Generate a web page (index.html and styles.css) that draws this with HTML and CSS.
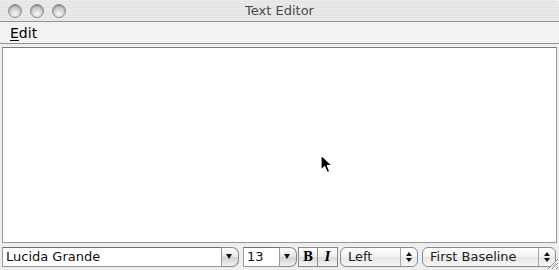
FILE: index.html
```html
<!DOCTYPE html>
<html lang="en">
<head>
    <meta charset="UTF-8">
    <title>Text Editor</title>
    <link rel="stylesheet" href="styles.css">
</head>
<body>
    <div class="window">
        <div class="titlebar">
            <div class="lights">
                <span class="light"></span>
                <span class="light"></span>
                <span class="light"></span>
            </div>
            <div class="title">Text Editor</div>
            <div></div>
        </div>
        <div class="menubar">
            <span class="menu"><u>E</u>dit</span>
        </div>
        <div class="editor">
            <svg class="pointer" width="14" height="21" viewBox="0 0 14 21">
                <path d="M1 1 L1 16 L4.6 12.6 L7.2 18.6 L9.8 17.5 L7.3 11.6 L12.2 11.6 Z" fill="#000" stroke="#fff" stroke-width="1.2" stroke-linejoin="round"/>
            </svg>
        </div>
        <div class="toolbar">
            <div class="combo font-combo">
                <span class="field">Lucida Grande</span>
                <span class="drop"><i class="tri"></i></span>
            </div>
            <div class="combo size-combo">
                <span class="field">13</span>
                <span class="drop"><i class="tri"></i></span>
            </div>
            <div class="styles">
                <button class="style bold">B</button>
                <button class="style italic">I</button>
            </div>
            <div class="popup align-popup">
                <span class="label">Left</span>
                <span class="arrows"><i class="up"></i><i class="down"></i></span>
            </div>
            <div class="popup base-popup">
                <span class="label">First Baseline</span>
                <span class="arrows"><i class="up"></i><i class="down"></i></span>
            </div>
            <svg class="grip" width="14" height="14" viewBox="0 0 14 14">
                <path d="M13 3 L3 13 M13 7 L7 13 M13 11 L11 13" stroke="#8a8a8a" stroke-width="1"/>
                <path d="M13 4 L4 13 M13 8 L8 13" stroke="#fff" stroke-width="1"/>
            </svg>
        </div>
    </div>
</body>
</html>
```

FILE: styles.css
```css
body, html {
    margin: 0;
    height: 100%;
    overflow: hidden;
    font-family: "DejaVu Sans", "Liberation Sans", sans-serif;
    color: #111;
}
.window {
    width: 559px;
    height: 270px;
    display: flex;
    flex-direction: column;
    background: repeating-linear-gradient(#f3f3f3 0, #f3f3f3 1px, #e9e9e9 1px, #e9e9e9 2px);
}
.titlebar {
    height: 21px;
    display: grid;
    grid-template-columns: 1fr auto 1fr;
    align-items: center;
    border-bottom: 1px solid #8e8e8e;
    border-top-right-radius: 7px;
    background: repeating-linear-gradient(#ececec 0, #ececec 1px, #e2e2e2 1px, #e2e2e2 2px);
}
.lights {
    display: flex;
    gap: 8px;
    padding-left: 8px;
}
.light {
    width: 12px;
    height: 12px;
    border-radius: 50%;
    border: 1px solid #8d8d8d;
    background: radial-gradient(circle at 50% 75%, #fafafa 0, #d2d2d2 45%, #a2a2a2 100%);
    box-shadow: inset 0 1px 1px rgba(0, 0, 0, 0.25);
}
.title {
    font-size: 13px;
    color: #4a4a4a;
}
.menubar {
    height: 21px;
    display: flex;
    align-items: center;
    padding-left: 10px;
    border-bottom: 1px solid #8e8e8e;
    background: repeating-linear-gradient(#f6f6f6 0, #f6f6f6 1px, #eeeeee 1px, #eeeeee 2px);
}
.menu {
    font-size: 14px;
    color: #000;
}
.menu u {
    text-underline-offset: 2px;
}
.editor {
    position: relative;
    flex: 1;
    margin: 3px 2px 0;
    background: #fff;
    border: 1px solid #9c9c9c;
    border-top-color: #7a7a7a;
}
.pointer {
    position: absolute;
    left: 317px;
    top: 106px;
}
.toolbar {
    position: relative;
    height: 27px;
    display: flex;
    align-items: center;
    padding: 0 3px 0 2px;
    gap: 4px;
}
.combo {
    display: flex;
    height: 20px;
}
.field {
    flex: 1;
    background: #fff;
    border: 1px solid #9a9a9a;
    border-top-color: #6e6e6e;
    font-size: 13px;
    line-height: 18px;
    padding-left: 3px;
    box-sizing: border-box;
}
.drop {
    width: 17px;
    border: 1px solid #8a8a8a;
    border-left: none;
    border-radius: 0 7px 7px 0;
    background: linear-gradient(#ffffff, #e4e4e4 50%, #cfcfcf 51%, #f2f2f2);
    display: flex;
    align-items: center;
    justify-content: center;
    box-sizing: border-box;
}
.tri {
    width: 0;
    height: 0;
    border-left: 3.5px solid transparent;
    border-right: 3.5px solid transparent;
    border-top: 5px solid #111;
    margin-right: 2px;
}
.font-combo {
    width: 237px;
}
.size-combo {
    width: 54px;
    margin-right: -3px;
}
.styles {
    display: flex;
}
.style {
    width: 20px;
    height: 20px;
    padding: 0;
    border: 1px solid #8a8a8a;
    background: linear-gradient(#ffffff, #ececec 50%, #dcdcdc 51%, #f4f4f4);
    font-family: "DejaVu Serif", "Liberation Serif", serif;
    font-size: 12px;
    color: #000;
}
.style + .style {
    border-left: none;
}
.bold {
    font-weight: bold;
}
.italic {
    font-style: italic;
    font-weight: bold;
}
.popup {
    display: flex;
    align-items: center;
    height: 20px;
    box-sizing: border-box;
    border: 1px solid #8a8a8a;
    border-radius: 6px;
    background: linear-gradient(#ffffff, #f2f2f2 50%, #e6e6e6 51%, #f6f6f6);
}
.align-popup {
    width: 78px;
    margin-left: -2px;
}
.base-popup {
    width: 134px;
}
.label {
    flex: 1;
    padding-left: 7px;
    font-size: 13px;
    color: #2a1a10;
}
.arrows {
    width: 16px;
    height: 100%;
    border-left: 1px solid #a8a8a8;
    display: flex;
    flex-direction: column;
    align-items: center;
    justify-content: center;
    gap: 2px;
}
.up, .down {
    width: 0;
    height: 0;
    border-left: 3px solid transparent;
    border-right: 3px solid transparent;
}
.up {
    border-bottom: 4px solid #111;
}
.down {
    border-top: 4px solid #111;
}
.grip {
    position: absolute;
    right: 0;
    bottom: 0;
}
```
